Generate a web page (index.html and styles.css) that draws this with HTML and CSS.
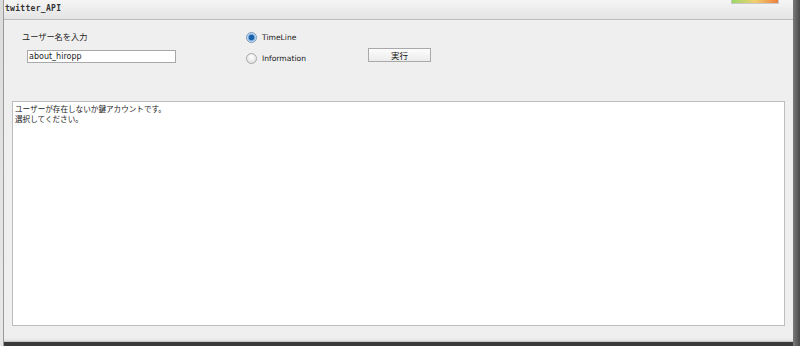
FILE: index.html
```html
<!DOCTYPE html>
<html>
<head>
<meta charset="utf-8">
<link rel="stylesheet" href="styles.css">
</head>
<body>
<div class="screen">
  <div class="left-strip"></div>
  <div class="window">
    <div class="titlebar">
      <span class="title">twitter_API</span>
      <span class="meter"></span>
    </div>
    <div class="content">
      <div class="controls">
        <div class="col-user">
          <div class="label">ユーザー名を入力</div>
          <div class="input">about_hiropp</div>
        </div>
        <div class="col-radio">
          <div class="radio-row"><span class="radio checked"></span><span>TimeLine</span></div>
          <div class="radio-row"><span class="radio"></span><span>Information</span></div>
        </div>
        <div class="col-btn">
          <div class="button">実行</div>
        </div>
      </div>
      <div class="textarea"><div class="line">ユーザーが存在しないか鍵アカウントです。</div><div class="line">選択してください。</div></div>
    </div>
    <div class="bottom"></div>
  </div>
  <div class="right-strip"></div>
</div>
</body>
</html>
```

FILE: styles.css
```css
* { box-sizing: border-box; }
html, body { margin: 0; padding: 0; }
body {
  width: 800px;
  height: 346px;
  overflow: hidden;
  background: #3a3a3a;
  font-family: "Noto Sans CJK JP", "DejaVu Sans", sans-serif;
}
.screen {
  display: flex;
  height: 346px;
}
.left-strip {
  width: 4px;
  background: linear-gradient(#dcdcdc, #e8e8e8);
  border-right: 1px solid #9a9a9a;
}
.window {
  width: 789px;
  height: 342px;
  display: flex;
  flex-direction: column;
  background: #efefef;
}
.titlebar {
  height: 20px;
  background: linear-gradient(#f5f5f5, #e4e4e4);
  border-bottom: 1px solid #bdbdbd;
  display: flex;
  align-items: center;
  justify-content: space-between;
  position: relative;
}
.title {
  font-family: "DejaVu Sans Mono", monospace;
  font-weight: bold;
  font-size: 8px;
  color: #333;
  padding-left: 1px;
  letter-spacing: 0.3px;
  margin-top: -2px;
}
.meter {
  position: absolute;
  right: 14px;
  top: 0;
  width: 48px;
  height: 4px;
  background: linear-gradient(90deg, #9cd86a, #f0d070 50%, #f08040);
  border: 1px solid #c8c8c8;
  border-top: none;
}
.content {
  flex: 1;
  padding: 0 8px 0 8px;
  display: flex;
  flex-direction: column;
}
.controls {
  height: 81px;
  display: flex;
  color: #222;
}
.col-user {
  width: 234px;
  padding-top: 9px;
}
.label {
  padding-left: 10px;
  height: 14px;
  line-height: 14px;
  font-size: 8.2px;
}
.input {
  margin-top: 7px;
  margin-left: 15px;
  width: 149px;
  height: 13px;
  background: #fff;
  border: 1px solid #a8a8a8;
  font-family: "DejaVu Sans", sans-serif;
  font-size: 8px;
  line-height: 11px;
  padding-left: 1px;
  color: #222;
}
.col-radio {
  width: 122px;
  padding-top: 11px;
  display: flex;
  flex-direction: column;
  gap: 9px;
}
.radio-row {
  display: flex;
  align-items: center;
  gap: 5px;
  height: 12px;
  font-family: "DejaVu Sans", sans-serif;
  font-size: 7.6px;
}
.radio {
  width: 11px;
  height: 11px;
  border-radius: 50%;
  border: 1px solid #a8a8a8;
  background: radial-gradient(circle at 50% 35%, #ffffff, #d8d8d8);
  display: inline-block;
}
.radio.checked {
  background: radial-gradient(circle, #1a5fa8 0 2.4px, #6aa6dc 3px, #d9e8f5 4.5px);
  border-color: #7a98b8;
}
.col-btn {
  padding-top: 28px;
}
.button {
  width: 63px;
  height: 14px;
  border: 1px solid #a9a9a9;
  background: linear-gradient(#fcfcfc, #ececec);
  text-align: center;
  font-size: 8.5px;
  line-height: 12px;
  color: #111;
}
.textarea {
  height: 225px;
  background: #fff;
  border: 1px solid #bdbdbd;
  font-size: 7.6px;
  padding: 2px 2px;
  color: #222;
}
.line {
  height: 10px;
  line-height: 10px;
  white-space: nowrap;
}
.bottom {
  height: 15px;
  border-bottom: 1px solid #c8c8c8;
  background: linear-gradient(#efefef 75%, #e2e2e2);
}
.right-strip {
  width: 7px;
  background: linear-gradient(90deg, #7a7a7a, #4a4a4a);
}
```
